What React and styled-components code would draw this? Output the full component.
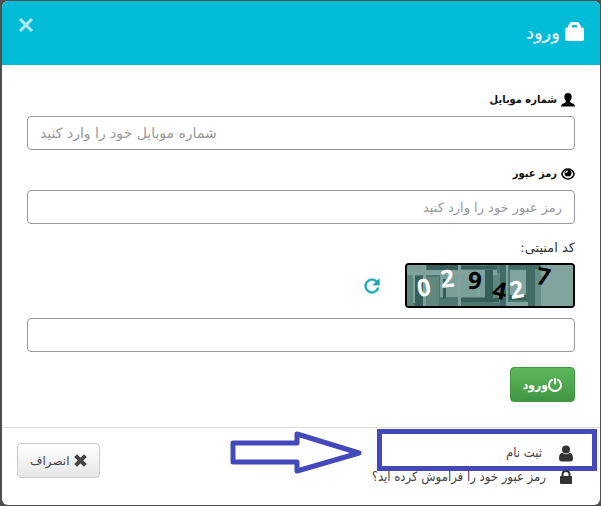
import styled, { createGlobalStyle, css } from "styled-components";
import { MdRefresh } from "react-icons/md";

const GlobalStyle = createGlobalStyle`
  * {
    box-sizing: border-box;
  }

  body {
    margin: 0;
    background: #4d4f4e;
    color: #333333;
    font-family: "DejaVu Sans", sans-serif;
    font-size: 12px;
    line-height: 20px;
  }

  input,
  button {
    font-family: inherit;
  }
`;

const condensed = css`
  font-family: "DejaVu Sans Condensed", "DejaVu Sans", sans-serif;
`;

const Backdrop = styled.div`
  min-height: 100vh;
  padding: 1px 1px 1px 2px;
`;

const Modal = styled.div`
  position: relative;
  background: #ffffff;
  border-radius: 6px;
  overflow: hidden;
`;

const Header = styled.header`
  display: flex;
  justify-content: space-between;
  align-items: flex-start;
  height: 64px;
  padding: 16px;
  background: #00bcd7;
  color: #ffffff;
`;

const Title = styled.h1`
  display: flex;
  align-items: center;
  gap: 5px;
  margin: 0;
  font-size: 18px;
  font-weight: normal;
  line-height: 32px;

  svg {
    margin-bottom: 4px;
  }
`;

const CloseButton = styled.button`
  display: flex;
  padding: 0;
  border: none;
  background: none;
  color: #b2ebf3;
  cursor: pointer;
`;

const Form = styled.form`
  padding: 25px;
`;

const Label = styled.label`
  display: flex;
  align-items: center;
  gap: 4px;
  margin-bottom: 5px;
  color: #333333;
  font-size: 13px;

  ${({ $strong }) =>
    $strong &&
    css`
      ${condensed}
      margin-bottom: 6px;
      color: #111111;
      font-size: 11px;
      font-weight: bold;
    `}
`;

const Input = styled.input`
  display: block;
  width: 100%;
  height: 34px;
  margin-bottom: ${({ $last }) => ($last ? "15px" : "14px")};
  padding: 6px 12px;
  border: 1px solid #999999;
  border-radius: 4px;
  background: #ffffff;
  color: #555555;
  font-size: ${({ $large }) => ($large ? "14px" : "13px")};
  outline: none;

  &::placeholder {
    color: #999999;
    opacity: 1;
  }

  &:focus {
    border-color: #00bcd7;
  }
`;

const CaptchaRow = styled.div`
  display: flex;
  align-items: center;
  gap: 22px;
  margin-bottom: 10px;
`;

const CaptchaImage = styled.svg`
  width: 170px;
  height: 45px;
  border: 2px solid #000000;
  border-radius: 4px;
  background: #4d7872;
`;

const RefreshButton = styled.button`
  display: flex;
  padding: 0;
  border: none;
  background: none;
  color: #1ba8b5;
  cursor: pointer;

  path:not([fill="none"]) {
    stroke: currentColor;
    stroke-width: 0.6px;
  }

  path[fill="none"] {
    stroke: none;
  }
`;

const buttonBase = css`
  display: flex;
  align-items: center;
  height: 35px;
  padding: 0 12px;
  border-radius: 4px;
  font-size: 12px;
  cursor: pointer;
`;

const SubmitButton = styled.button`
  ${buttonBase}
  ${condensed}
  border: 1px solid #419641;
  background: linear-gradient(#5cb85c, #419641);
  color: #ffffff;
  font-weight: bold;
`;

const CancelButton = styled.button`
  ${buttonBase}
  gap: 5px;
  border: 1px solid #cccccc;
  background: linear-gradient(#ffffff, #e6e6e6);
  color: #444444;
`;

const Footer = styled.footer`
  display: flex;
  justify-content: space-between;
  align-items: flex-start;
  height: 78px;
  padding: 15px 27px 15px 15px;
  border-top: 1px solid #dddddd;
`;

const Links = styled.nav`
  display: flex;
  flex-direction: column;
  gap: 4px;
`;

const FooterLink = styled.a`
  ${condensed}
  position: relative;
  display: flex;
  align-items: center;
  gap: ${({ $wide }) => ($wide ? "17px" : "13px")};
  color: #444444;
  font-size: 13px;
  text-decoration: none;

  svg {
    color: #333333;
  }
`;

const Highlight = styled.span`
  position: absolute;
  top: -14px;
  right: -24px;
  width: 220px;
  height: 42px;
  border: 5px solid #4348bb;
`;

const Arrow = styled.svg`
  position: absolute;
  right: 210px;
  top: -14px;
`;

function BagIcon() {
  return (
    <svg width="19" height="20" viewBox="0 0 19 20" fill="currentColor">
      <path
        fillRule="evenodd"
        d="M3 6.500V5L5 2Q5.700 1 7 1h5Q13.300 1 14 2L16 5V6.500h1Q19 6.500 19 8.500V18q0 2-2 2H2q-2 0-2-2V8.500Q0 6.500 2 6.500ZM7 6.500h5V5Q12 4 11 4H8Q7 4 7 5Z"
      />
    </svg>
  );
}

function PersonIcon() {
  return (
    <svg width="14" height="14" viewBox="0 0 14 14" fill="#000000">
      <path d="M7 0C9.500 0 10.700 1.600 10.700 3.800C10.700 5.700 10 7 9.200 7.900C9 9.100 9.500 9.500 10.500 9.900L12.900 10.900Q13.900 11.400 13.900 13.500H.1Q.1 11.400 1.100 10.900L3.500 9.900C4.500 9.500 5 9.100 4.800 7.900C4 7 3.300 5.700 3.300 3.800C3.300 1.600 4.500 0 7 0Z" />
    </svg>
  );
}

function EyeIcon() {
  return (
    <svg width="14" height="12" viewBox="0 0 14 12">
      <path d="M.8 6C2 2.600 4.200 1 7 1S12 2.600 13.200 6C12 9.200 9.800 10.900 7 10.900S2 9.200.8 6Z" fill="#ffffff" stroke="#000000" strokeWidth="1.500" />
      <circle cx="7" cy="5" r="3.500" fill="#000000" />
      <path d="M5 5Q5 3.200 6.700 2.800" fill="none" stroke="#ffffff" strokeWidth="1.200" />
    </svg>
  );
}

function CrossIcon({ size, width }) {
  return (
    <svg width={size} height={size} viewBox="0 0 16 16" fill="none" stroke="currentColor" strokeWidth={width}>
      <path d="M2 2L14 14M14 2L2 14" />
    </svg>
  );
}

function PowerIcon() {
  return (
    <svg width="14" height="14" viewBox="0 0 14 14" fill="none" stroke="currentColor" strokeLinecap="round">
      <path d="M4 1.900A6 6 0 1 0 10 1.900" strokeWidth="2" />
      <path d="M7 1V5.500" strokeWidth="2" />
    </svg>
  );
}

function UserIcon() {
  return (
    <svg width="14" height="17" viewBox="0 0 14 17" fill="currentColor">
      <circle cx="7" cy="4.500" r="4" />
      <path d="M3.300 7.700Q7 10.800 10.700 7.700Q14 8.200 14 13.300Q14 16.500 11.300 16.500H2.700Q0 16.500 0 13.300Q0 8.200 3.300 7.700Z" />
    </svg>
  );
}

function LockIcon() {
  return (
    <svg width="14" height="14" viewBox="0 0 14 14" fill="currentColor">
      <path
        fillRule="evenodd"
        d="M2.500 6V4.500Q2.500 0 7 0T11.500 4.500V6H12Q13 6 13 7V13Q13 14 12 14H2Q1 14 1 13V7Q1 6 2 6ZM4.500 6H9.500V4.500Q9.500 2 7 2T4.500 4.500Z"
      />
    </svg>
  );
}

const digits = [
  { char: "0", x: 18, y: 31, angle: -8, fill: "#ffffff" },
  { char: "2", x: 41, y: 22, angle: -6, fill: "#ffffff" },
  { char: "9", x: 67, y: 24, angle: 5, fill: "#000000" },
  { char: "4", x: 91, y: 34, angle: 12, fill: "#000000" },
  { char: "2", x: 111, y: 33, angle: -10, fill: "#ffffff" },
  { char: "7", x: 135, y: 20, angle: 10, fill: "#000000" },
];

function Captcha() {
  return (
    <CaptchaImage viewBox="0 0 166 41" role="img" aria-label="029427">
      <path d="M0 0H166V41H0Z" fill="#4d7872" />
      <path d="M0 0H16V6H0ZM33 9H51V32H33ZM54 9H78V32H54Z" fill="#7b9f99" />
      <path d="M0 6H6V41H0ZM19 12H32V41H19ZM86 8H93V38H86Z" fill="#60887f" />
      <path d="M0 5H90V10H0ZM6 10H8V38H6ZM16 0H19V41H16ZM51 0H54V41H51ZM70 10H73V32H70Z" fill="#81a39d" />
      <path d="M20 0H51V5H20ZM54 1H90V4H54ZM8 11H16V41H8ZM36 14H39V34H36ZM78 5H86V33H78ZM54 33H92V37H54Z" fill="#365f59" />
      <path d="M93 0H99V41H93ZM102 0H134V4H102ZM119 0H128V41H119Z" fill="#416b65" />
      <path d="M99 0H101V41H99ZM103 5H119V30H103ZM101 37H121V41H101ZM134 0H166V41H134Z" fill="#82a49f" />
      <path d="M102 30H119V35H102Z" fill="#365f59" />
      <path d="M128 4H134V41H128Z" fill="#668d86" />
      {digits.map(({ char, x, y, angle, fill }) => (
        <text
          key={x}
          x={x}
          y={y}
          textAnchor="middle"
          transform={`rotate(${angle} ${x} ${y})`}
          fill={fill}
          fontFamily="Open Sans, sans-serif"
          fontSize="24"
          fontWeight="bold"
        >
          {char}
        </text>
      ))}
    </CaptchaImage>
  );
}

export default function App() {
  return (
    <Backdrop dir="rtl">
      <GlobalStyle />
      <Modal role="dialog" aria-labelledby="login-title">
        <Header>
          <Title id="login-title">
            <BagIcon />
            ورود
          </Title>
          <CloseButton type="button" aria-label="بستن">
            <CrossIcon size={16} width={3} />
          </CloseButton>
        </Header>

        <Form onSubmit={(event) => event.preventDefault()}>
          <Label htmlFor="mobile" $strong>
            <PersonIcon />
            شماره موبایل
          </Label>
          <Input id="mobile" type="tel" dir="ltr" placeholder="شماره موبایل خود را وارد کنید" $large />

          <Label htmlFor="password" $strong>
            <EyeIcon />
            رمز عبور
          </Label>
          <Input id="password" type="password" placeholder="رمز عبور خود را وارد کنید" />

          <Label htmlFor="captcha">کد امنیتی:</Label>
          <CaptchaRow>
            <Captcha />
            <RefreshButton type="button" aria-label="تازه سازی">
              <MdRefresh size={22} />
            </RefreshButton>
          </CaptchaRow>
          <Input id="captcha" type="text" autoComplete="off" $last />

          <SubmitButton type="submit">
            <PowerIcon />
            ورود
          </SubmitButton>
        </Form>

        <Footer>
          <Links>
            <FooterLink href="#register" $wide>
              <UserIcon />
              ثبت نام
              <Highlight />
              <Arrow width="134" height="46" viewBox="0 0 134 46" fill="none" stroke="#4348bb" strokeWidth="5" strokeLinejoin="round">
                <path d="M4 14H68V5L130 24L68 42V33H4Z" />
              </Arrow>
            </FooterLink>
            <FooterLink href="#forgot">
              <LockIcon />
              رمز عبور خود را فراموش کرده اید؟
            </FooterLink>
          </Links>
          <CancelButton type="button">
            <CrossIcon size={13} width={5} />
            انصراف
          </CancelButton>
        </Footer>
      </Modal>
    </Backdrop>
  );
}
